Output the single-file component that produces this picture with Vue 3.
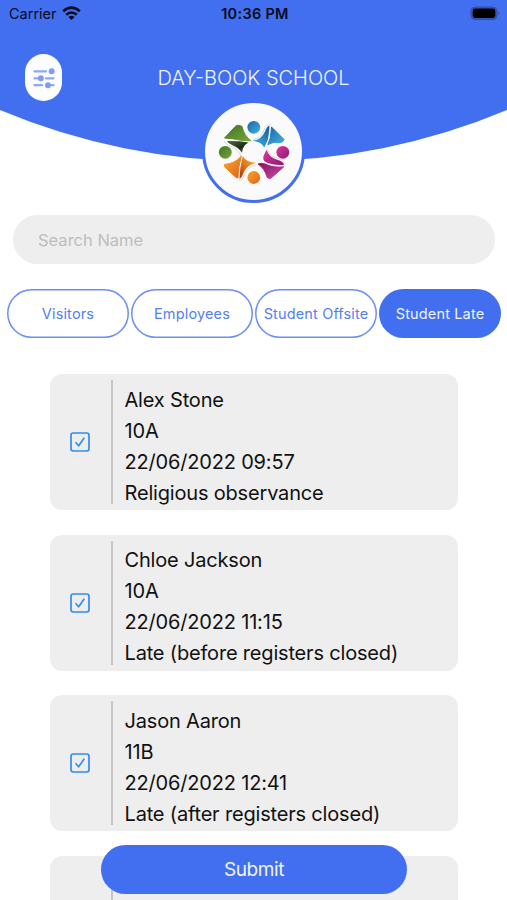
<script setup>
import { ref } from 'vue'

const search = ref('')
const tabs = ['Visitors', 'Employees', 'Student Offsite', 'Student Late']
const activeTab = ref('Student Late')
const students = ref([
  { name: 'Alex Stone', form: '10A', time: '22/06/2022 09:57', reason: 'Religious observance', checked: true },
  { name: 'Chloe Jackson', form: '10A', time: '22/06/2022 11:15', reason: 'Late (before registers closed)', checked: true },
  { name: 'Jason Aaron', form: '11B', time: '22/06/2022 12:41', reason: 'Late (after registers closed)', checked: true },
  { name: '', form: '', time: '', reason: '', checked: false }
])
</script>

<template>
  <div class="screen">
    <header class="header">
      <svg class="curve" width="507" height="162" viewBox="0 0 507 162" aria-hidden="true">
        <path d="M0 0H507V110A655 655 0 0 1 0 110Z" fill="#416ff0" />
      </svg>
      <div class="status">
        <div class="carrier">
          <span>Carrier</span>
          <svg width="19" height="15" viewBox="0 0 19 15" fill="none" stroke="#070b1c" stroke-width="2.6">
            <path d="M1.2 5.2Q9.5-2 17.8 5.2" />
            <path d="M4.2 8.8Q9.5 4.2 14.8 8.8" />
            <path d="M9.5 14L6.5 11Q9.5 8.6 12.5 11Z" fill="#070b1c" stroke="none" />
          </svg>
        </div>
        <div class="clock">10:36 PM</div>
        <svg class="battery" width="31" height="15" viewBox="0 0 31 15">
          <rect x="1" y="1" width="26" height="12.5" rx="4" fill="#3558b4" stroke="#2f509f" stroke-width="1" />
          <rect x="2.7" y="2.6" width="22.6" height="9.4" rx="2.4" fill="#000" />
          <path d="M28.7 5.2Q30.5 7.2 28.7 9.3Z" fill="#263f87" />
        </svg>
      </div>
      <div class="titlebar">
        <button class="menu" aria-label="Filters">
          <svg width="24" height="24" viewBox="0 0 24 24" fill="#7f9ef3" stroke="#8ba7f5" stroke-width="2.2" stroke-linecap="round">
            <path d="M2.5 5.3H14M2.5 12.3H5.5M14 12.3H21.5M2.5 19.2H10M19.5 19.2H21.5" />
            <circle cx="19.7" cy="5.3" r="3" stroke="none" />
            <circle cx="8.8" cy="12.3" r="3" stroke="none" />
            <circle cx="16" cy="19.2" r="3" stroke="none" />
          </svg>
        </button>
        <h1>DAY-BOOK SCHOOL</h1>
      </div>
      <div class="logo">
        <svg width="97" height="97" viewBox="0 0 97 97">
          <defs>
            <linearGradient id="green" x1="0" y1="0" x2="1" y2="1"><stop stop-color="#3c761f" /><stop offset="1" stop-color="#7ba43e" /></linearGradient>
            <linearGradient id="olive" x1="0" y1="0" x2="1" y2="1"><stop stop-color="#4f7333" /><stop offset=".6" stop-color="#20291a" /><stop offset="1" stop-color="#5c813e" /></linearGradient>
            <linearGradient id="blue" x1="0" y1="0" x2="1" y2="1"><stop stop-color="#1a62a8" /><stop offset="1" stop-color="#43b4df" /></linearGradient>
            <linearGradient id="sky" x1="1" y1="0" x2="0" y2="1"><stop stop-color="#12599e" /><stop offset="1" stop-color="#41bce9" /></linearGradient>
            <linearGradient id="pink" x1="0" y1="0" x2="1" y2="1"><stop stop-color="#d93a9c" /><stop offset="1" stop-color="#8e1771" /></linearGradient>
            <linearGradient id="magenta" x1="0" y1="0" x2="1" y2="1"><stop stop-color="#861266" /><stop offset="1" stop-color="#d04ba5" /></linearGradient>
            <linearGradient id="orange" x1="0" y1="0" x2="1" y2="1"><stop stop-color="#f9a52c" /><stop offset="1" stop-color="#df6419" /></linearGradient>
            <linearGradient id="amber" x1="0" y1="1" x2="1" y2="0"><stop stop-color="#963716" /><stop offset=".45" stop-color="#df741c" /><stop offset="1" stop-color="#ffbd36" /></linearGradient>
          </defs>
          <g stroke-linejoin="round" stroke-width="1">
            <circle cx="48.8" cy="23.3" r="6.4" fill="url(#blue)" />
            <circle cx="20.3" cy="48.3" r="6.4" fill="url(#green)" />
            <circle cx="77.8" cy="48.3" r="6.4" fill="url(#pink)" />
            <circle cx="48.8" cy="73.5" r="6.4" fill="url(#orange)" />
            <path d="M19.5 34L30.5 22.3Q32.5 20.3 37 22.4Q39 31.5 46 36.8L37 36.4Q29 34.6 19.5 34Z" fill="url(#green)" stroke="url(#green)" />
            <path d="M22 37Q32 36.6 43.5 38.4Q37.5 41 37 48.8Q33.5 43.5 28 41.5Q23 39 22 37Z" fill="url(#olive)" />
            <path d="M47 36.8Q56 36.2 60 27.5Q61.8 22.5 64.5 21.8Q63.8 31.5 62.8 36L59.2 43.5Q56.5 38 47 36.8Z" fill="url(#sky)" />
            <path d="M66.5 23L79.2 35.5Q78.4 38.8 74 38.6Q68 37.6 62.8 40.6L65.4 33.5Z" fill="url(#blue)" stroke="url(#blue)" />
            <path d="M61.5 45.8Q64 53.2 71.5 55.5Q78.6 57.2 79 61Q67 61.5 60.5 58Q56.9 55.5 59 51Z" fill="url(#pink)" />
            <path d="M53 60Q56 58.8 60 60Q68 64 78.8 62.8L66.2 74Q63.5 75.5 62 73Q59.5 64 53 60Z" fill="url(#magenta)" stroke="url(#magenta)" />
            <path d="M19.6 60.3Q29 60.2 36.3 52.2Q35 58.5 33.6 64L33 73.8Q31.5 74.4 29.3 72L19.4 62.5Z" fill="url(#orange)" stroke="url(#orange)" />
            <path d="M37.8 52.2Q41.5 58.5 51.2 58.6Q42.3 60.8 39.2 67.6Q36.7 74 34.5 75Q34.8 68 35.5 63Z" fill="url(#amber)" />
          </g>
          <path d="M19 37Q22.5 42 29.5 44Q35 47.5 36 52M65.6 20.5Q61 20 59.2 26Q56 34 48 35.8M80.2 60.5Q78 55 71 53.7Q64 51.5 62.7 45M33.8 76.5Q37 76.8 39.7 70Q43 62.5 51.5 61" fill="none" stroke="#bfc2be" stroke-width=".6" />
        </svg>
      </div>
    </header>

    <input v-model="search" class="search" placeholder="Search Name" />

    <nav class="tabs">
      <button v-for="tab in tabs" :key="tab" class="tab" :class="{ active: tab === activeTab }" @click="activeTab = tab">{{ tab }}</button>
    </nav>

    <main class="list">
      <article v-for="(student, i) in students" :key="i" class="card">
        <div class="select" @click="student.checked = !student.checked">
          <svg v-if="student.checked" width="20" height="20" viewBox="0 0 20 20" fill="none" stroke="#2f8cf0">
            <rect x="1" y="1" width="18" height="18" rx="2.2" stroke-width="1.7" />
            <path d="M5.5 10.2L8.7 13.8L14.3 5.7" stroke-width="1.6" />
          </svg>
        </div>
        <div class="details">
          <div>{{ student.name }}</div>
          <div>{{ student.form }}</div>
          <div>{{ student.time }}</div>
          <div>{{ student.reason }}</div>
        </div>
      </article>
    </main>

    <button class="submit">Submit</button>
  </div>
</template>

<style>
body {
  overflow: hidden;
}
</style>

<style scoped>
.screen {
  position: relative;
  width: 507px;
  height: 900px;
  overflow: hidden;
  background: #fff;
  font-family: Inter, "Liberation Sans", sans-serif;
}
button {
  padding: 0;
  border: 0;
  font-family: inherit;
}
.header {
  position: relative;
  height: 215.4px;
}
.curve {
  position: absolute;
  inset: 0;
}
.status {
  position: relative;
  display: grid;
  grid-template-columns: 1fr auto 1fr;
  align-items: center;
  height: 27px;
  padding: 0 6px 0 9px;
  font-size: 14.5px;
  color: #070b1c;
}
.carrier {
  display: flex;
  align-items: center;
  gap: 5px;
}
.carrier svg {
  margin-bottom: 1px;
}
.clock {
  font-weight: 600;
  letter-spacing: 0.3px;
}
.battery {
  justify-self: end;
}
.titlebar {
  position: relative;
  display: grid;
  grid-template-columns: 38px 1fr 38px;
  align-items: center;
  height: 48px;
  margin-top: 27px;
  padding: 0 25px;
}
.menu {
  display: flex;
  align-items: center;
  justify-content: center;
  width: 37px;
  height: 47px;
  margin-bottom: 1px;
  border-radius: 18.5px;
  background: #fcfdff;
}
h1 {
  margin: 0;
  text-align: center;
  font-size: 20px;
  font-weight: 300;
  line-height: 48px;
  color: #f2f5ff;
}
.logo {
  position: absolute;
  left: 202px;
  top: 100px;
  width: 97px;
  height: 97px;
  border: 3px solid #416ff0;
  border-radius: 50%;
  background: #fafafa;
}
.logo svg {
  display: block;
  margin-top: 1px;
}
.search {
  display: block;
  box-sizing: border-box;
  width: 482px;
  height: 49px;
  margin-left: 13px;
  padding: 0 25px;
  border: 0;
  border-radius: 24.5px;
  outline: 0;
  background: #eee;
  font: 16.5px Inter, "Liberation Sans", sans-serif;
}
.search::placeholder {
  color: #bdbdbf;
  opacity: 1;
}
.tabs {
  display: grid;
  grid-template-columns: repeat(4, 1fr);
  gap: 2px;
  padding: 0 6px 0 7px;
  margin-top: 24.6px;
}
.tab {
  height: 49px;
  border-radius: 24.5px;
  box-shadow: inset 0 0 0 1.5px #6b8ff3;
  background: #fff;
  color: #5480f0;
  font-size: 14.5px;
  letter-spacing: 0.15px;
  white-space: nowrap;
}
.tab.active {
  box-shadow: none;
  background: #416ff0;
  color: #f0f4ff;
}
.list {
  display: flex;
  flex-direction: column;
  gap: 24.5px;
  padding: 36.4px 49px 0 50px;
}
.card {
  display: flex;
  flex: none;
  box-sizing: border-box;
  height: 136px;
  padding: 6px 0;
  border-radius: 12px;
  background: #eee;
}
.select {
  display: flex;
  align-items: center;
  justify-content: center;
  width: 60.5px;
  border-right: 2px solid #c5c5c5;
}
.details {
  padding: 4.4px 0 0 12px;
  font-size: 20px;
  line-height: 31px;
  letter-spacing: -0.18px;
  color: #111;
  white-space: nowrap;
}
.submit {
  position: absolute;
  left: 101px;
  bottom: 6px;
  width: 306px;
  height: 49px;
  border-radius: 24.5px;
  background: #416ff0;
  color: #f0f4ff;
  font-size: 19px;
  letter-spacing: -0.4px;
}
</style>
